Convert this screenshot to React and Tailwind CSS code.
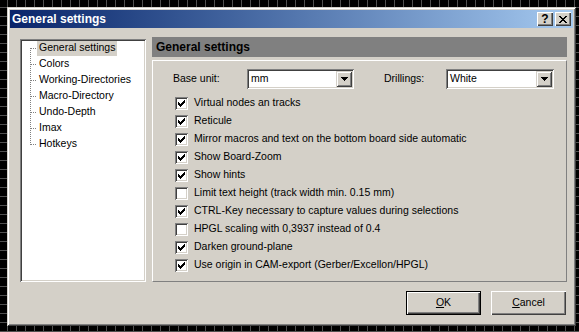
import React from "react";

const font = { fontFamily: '"Liberation Sans", Arial, sans-serif' };

const treeItems = [
  "General settings",
  "Colors",
  "Working-Directories",
  "Macro-Directory",
  "Undo-Depth",
  "Imax",
  "Hotkeys",
];

const options = [
  ["Virtual nodes an tracks", true],
  ["Reticule", true],
  ["Mirror macros and text on the bottom board side automatic", true],
  ["Show Board-Zoom", true],
  ["Show hints", true],
  ["Limit text height (track width min. 0.15 mm)", false],
  ["CTRL-Key necessary to capture values during selections", true],
  ["HPGL scaling with 0,3937 instead of 0.4", false],
  ["Darken ground-plane", true],
  ["Use origin in CAM-export (Gerber/Excellon/HPGL)", true],
];

// pixel check mark, 7x7
const checkRects = [
  [6, 0, 1], [5, 1, 2], [0, 2, 1], [4, 2, 3], [0, 3, 2], [3, 3, 3],
  [0, 4, 5], [1, 5, 3], [2, 6, 1],
];

function CheckBox({ checked }) {
  return (
    <span className="w-[13px] h-[13px] shrink-0 bg-white flex items-center justify-center shadow-[inset_1px_1px_#808080,inset_-1px_-1px_#ffffff,inset_2px_2px_#404040,inset_-2px_-2px_#d4d0c8]">
      {checked && (
        <svg width="7" height="7" viewBox="0 0 7 7" shapeRendering="crispEdges">
          {checkRects.map(([x, y, w], i) => (
            <rect key={i} x={x} y={y} width={w} height="1" fill="#000" />
          ))}
        </svg>
      )}
    </span>
  );
}

function Combo({ value, width }) {
  return (
    <div
      className={`${width} h-[20px] bg-white flex items-center p-[2px] shadow-[inset_1px_1px_#808080,inset_-1px_-1px_#ffffff,inset_2px_2px_#404040,inset_-2px_-2px_#d4d0c8]`}
    >
      <span className="flex-1 pl-[2px] text-black">{value}</span>
      <span className="w-[16px] h-[16px] bg-[#d4d0c8] flex items-center justify-center shadow-[inset_1px_1px_#d4d0c8,inset_-1px_-1px_#404040,inset_2px_2px_#ffffff,inset_-2px_-2px_#808080]">
        <svg width="7" height="4" viewBox="0 0 7 4" shapeRendering="crispEdges">
          <path d="M0 0h7v1h-1v1h-1v1h-1v1h-1v-1h-1v-1h-1v-1h-1z" fill="#000" />
        </svg>
      </span>
    </div>
  );
}

function TitleButton({ children }) {
  return (
    <span className="w-[16px] h-[14px] bg-[#d4d0c8] flex items-center justify-center shadow-[inset_1px_1px_#ffffff,inset_-1px_-1px_#404040,inset_-2px_-2px_#808080]">
      {children}
    </span>
  );
}

function Button({ children, isDefault }) {
  const face = (
    <span className="w-full h-full bg-[#d4d0c8] flex items-center justify-center text-black shadow-[inset_1px_1px_#ffffff,inset_-1px_-1px_#404040,inset_-2px_-2px_#808080]">
      {children}
    </span>
  );
  return isDefault ? (
    <span className="w-[75px] h-[24px] border border-black flex">{face}</span>
  ) : (
    <span className="w-[75px] h-[24px] flex">{face}</span>
  );
}

export default function App() {
  return (
    <div
      className="w-[579px] h-[332px] overflow-hidden bg-black bg-[linear-gradient(to_right,#505050_1px,transparent_1px),linear-gradient(to_bottom,#505050_1px,transparent_1px)] bg-[size:9px_9px] bg-[position:7px_7px] pl-[7px] pt-[7px] text-[10.5px]"
      style={font}
    >
      <div className="w-[569px] h-[319px] bg-[#d4d0c8] p-[3px] flex flex-col shadow-[inset_1px_1px_#d4d0c8,inset_-1px_-1px_#404040,inset_2px_2px_#ffffff,inset_-2px_-2px_#808080]">
        {/* title bar */}
        <div className="h-[18px] shrink-0 flex items-center justify-between bg-linear-to-r from-[#0a246a] to-[#a6caf0] pl-[2px] pr-[2px]">
          <span className="text-white font-bold text-[12px]">General settings</span>
          <div className="flex gap-[2px]">
            <TitleButton>
              <span className="text-black font-bold text-[12px] leading-none">?</span>
            </TitleButton>
            <TitleButton>
              <svg width="8" height="7" viewBox="0 0 8 7" shapeRendering="crispEdges">
                <path d="M0 0h2v1h1v1h2v-1h1v-1h2v1h-1v1h-1v1h-1v1h1v1h1v1h1v1h-2v-1h-1v-1h-2v1h-1v1h-2v-1h1v-1h1v-1h1v-1h-1v-1h-1v-1h-1z" fill="#000" />
              </svg>
            </TitleButton>
          </div>
        </div>

        {/* body */}
        <div className="flex-1 flex flex-col pt-[9px] pl-[10px] pr-[6px]">
          <div className="h-[245px] flex gap-[6px]">
            {/* tree */}
            <div className="w-[126px] mt-[2px] bg-white p-[2px] pt-[1px] shadow-[inset_1px_1px_#808080,inset_-1px_-1px_#ffffff,inset_2px_2px_#404040,inset_-2px_-2px_#d4d0c8]">
              {treeItems.map((item, i) => (
                <div key={item} className="h-[16px] flex items-center">
                  <svg width="15" height="16" className="shrink-0" shapeRendering="crispEdges">
                    <line
                      x1="8.5"
                      x2="8.5"
                      y1={i === 0 ? 8 : 0}
                      y2={i === treeItems.length - 1 ? 9 : 16}
                      stroke="#808080"
                      strokeDasharray="1 1"
                    />
                    <line x1="9" x2="15" y1="8.5" y2="8.5" stroke="#808080" strokeDasharray="1 1" />
                  </svg>
                  <span
                    className={
                      i === 0
                        ? "h-[15px] flex items-center px-[2px] bg-[#d4d0c8] text-black"
                        : "h-[15px] flex items-center px-[2px] text-black"
                    }
                  >
                    {item}
                  </span>
                </div>
              ))}
            </div>

            {/* settings panel */}
            <div className="flex-1 flex flex-col">
              <div className="h-[20px] bg-[#808080] flex items-center pl-[4px] text-black font-bold text-[12px]">
                General settings
              </div>
              <div className="flex-1 mt-[3px] pl-[20px] pt-[8px] border border-t-white border-l-white border-r-[#808080] border-b-[#808080]">
                <div className="h-[20px] flex items-center text-black">
                  <span className="w-[74px]">Base unit:</span>
                  <Combo value="mm" width="w-[107px]" />
                  <span className="w-[62px] ml-[30px]">Drillings:</span>
                  <Combo value="White" width="w-[108px]" />
                </div>
                <div className="mt-[5px] pl-[2px] flex flex-col">
                  {options.map(([label, checked]) => (
                    <div key={label} className="h-[18px] flex items-center gap-[6px] text-black">
                      <CheckBox checked={checked} />
                      <span>{label}</span>
                    </div>
                  ))}
                </div>
              </div>
            </div>
          </div>

          {/* buttons */}
          <div className="mt-[9px] flex justify-end gap-[10px] pr-[1px]">
            <Button isDefault>
              <span>
                <span className="underline">O</span>K
              </span>
            </Button>
            <Button>
              <span>
                <span className="underline">C</span>ancel
              </span>
            </Button>
          </div>
        </div>
      </div>
    </div>
  );
}
